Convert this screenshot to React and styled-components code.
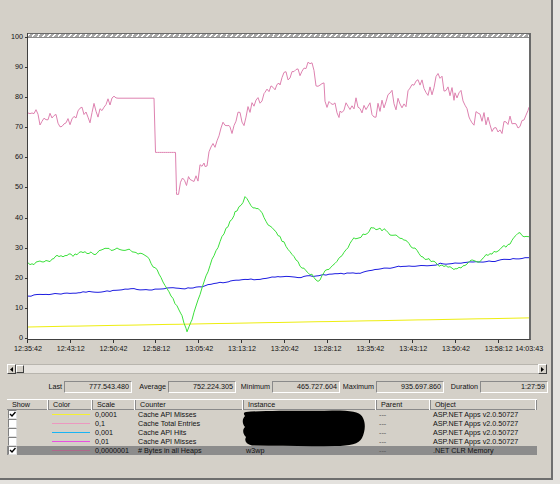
import styled, { createGlobalStyle } from "styled-components";

const GlobalStyle = createGlobalStyle`
  html, body { margin: 0; padding: 0; background: #e4e2de; }
  body {
    font-family: "Liberation Sans", Arial, sans-serif;
    font-size: 7.2px;
    color: #111;
  }
`;

// small seeded random so the traces look the same every run
function rng(seed) {
  let s = seed;
  return () => {
    s = (s + 0x6d2b79f5) | 0;
    let t = Math.imul(s ^ (s >>> 15), 1 | s);
    t = (t + Math.imul(t ^ (t >>> 7), 61 | t)) ^ t;
    return ((t ^ (t >>> 14)) >>> 0) / 4294967296;
  };
}

function series(keys, step, seed, smooth) {
  const r = rng(seed);
  const pts = [];
  let n = 0;
  for (let i = 0; i < keys.length - 1; i++) {
    const [x0, v0, a0] = keys[i];
    const [x1, v1, a1] = keys[i + 1];
    if (x1 - x0 < 1) {
      pts.push([x1, v1]);
      continue;
    }
    for (let x = x0; x < x1; x += step) {
      const t = (x - x0) / (x1 - x0);
      const base = v0 + (v1 - v0) * t;
      const amp = a0 + (a1 - a0) * t;
      n = n * smooth + (r() * 2 - 1) * amp;
      if (n > amp * 1.4) n = amp * 1.4;
      if (n < -amp * 1.4) n = -amp * 1.4;
      pts.push([x, amp > 0 ? base + n : base]);
    }
  }
  const last = keys[keys.length - 1];
  pts.push([last[0], last[1]]);
  return pts.map(([x, v]) => `${(x - 28).toFixed(1)},${(301 - v * 3.01).toFixed(1)}`).join(" ");
}

const pinkKeys = [
  [28, 75, 3], [40, 73, 3], [60, 73, 3], [80, 74, 3], [100, 76, 3], [112, 79, 2],
  [118, 80, 0], [155, 80, 0], [155.5, 62, 0], [176, 62, 0], [176.5, 49, 3.5],
  [190, 51, 3.5], [205, 60, 3], [215, 66, 3], [230, 70, 3], [250, 75, 3],
  [265, 82, 2], [280, 86, 2], [300, 89, 2], [312, 93, 1], [316, 83, 2.5],
  [325, 80, 3.5], [340, 78, 3.5], [360, 77, 3.5], [380, 78, 3.5], [400, 80, 3.5],
  [420, 84, 3.5], [440, 85, 3], [455, 80, 3], [470, 76, 3], [490, 72, 3],
  [510, 71, 3], [522, 71, 2], [529, 77, 1],
];

const greenKeys = [
  [28, 25], [40, 26], [55, 27], [75, 28], [95, 29], [115, 30], [130, 29], [145, 27],
  [155, 24], [165, 18], [175, 12], [182, 7], [187, 3], [192, 6], [200, 14], [210, 24],
  [222, 34], [235, 42], [245, 47], [258, 43], [272, 37], [288, 30], [302, 24], [312, 21],
  [318, 20], [325, 22], [340, 28], [355, 33], [372, 37], [388, 36], [405, 32], [425, 27],
  [442, 24], [455, 23], [470, 25], [490, 28], [508, 31], [520, 35], [529, 34],
].map(([x, v]) => [x, v, 0.7]);

const blueKeys = [
  [28, 14.5], [80, 15.5], [140, 16.5], [190, 17], [230, 19], [280, 20.5], [320, 21],
  [360, 22], [400, 24], [440, 25], [480, 25.5], [529, 27],
].map(([x, v]) => [x, v, 0.25]);

const yellowKeys = [[28, 4, 0], [529, 7, 0]];

const yLabels = ["100", "90", "80", "70", "60", "50", "40", "30", "20", "10", "0"];
const xLabels = [
  "12:35:42", "12:43:12", "12:50:42", "12:58:12", "13:05:42", "13:13:12",
  "13:20:42", "13:28:12", "13:35:42", "13:43:12", "13:50:42", "13:58:12",
];

const stats = [
  ["Last", "777.543.480"],
  ["Average", "752.224.305"],
  ["Minimum", "465.727.604"],
  ["Maximum", "935.697.860"],
  ["Duration", "1:27:59"],
];

const columns = ["Show", "Color", "Scale", "Counter", "Instance", "Parent", "Object"];

const rows = [
  { checked: true, color: "#f4f030", scale: "0,0001", counter: "Cache API Misses", instance: "", object: "ASP.NET Apps v2.0.50727" },
  { checked: false, color: "#ec98c0", scale: "0,1", counter: "Cache Total Entries", instance: "", object: "ASP.NET Apps v2.0.50727" },
  { checked: false, color: "#18b4f4", scale: "0,001", counter: "Cache API Hits", instance: "", object: "ASP.NET Apps v2.0.50727" },
  { checked: false, color: "#e850e0", scale: "0,01", counter: "Cache API Misses", instance: "", object: "ASP.NET Apps v2.0.50727" },
  { checked: true, color: "#b0688c", scale: "0,0000001", counter: "# Bytes in all Heaps", instance: "w3wp", object: ".NET CLR Memory", selected: true },
];

const App = () => {
  return (
    <>
      <GlobalStyle />
      <Window>
        <ChartRow>
          <YAxis>
            {yLabels.map((l) => (
              <YLabel key={l}>{l}</YLabel>
            ))}
          </YAxis>
          <PlotColumn>
            <Plot>
              <Hatch />
              <svg width="501" height="301" viewBox="0 0 501 301">
                <polyline points={series(yellowKeys, 10, 1, 0)} fill="none" stroke="#eeee10" strokeWidth="1" />
                <polyline points={series(blueKeys, 3, 7, 0.6)} fill="none" stroke="#1c1ce0" strokeWidth="1" />
                <polyline points={series(greenKeys, 2, 3, 0.6)} fill="none" stroke="#3ce03c" strokeWidth="1" />
                <polyline points={series(pinkKeys, 2, 11, 0.45)} fill="none" stroke="#de82b0" strokeWidth="1" />
              </svg>
            </Plot>
            <XTicks />
          </PlotColumn>
        </ChartRow>

        <XAxis>
          {xLabels.map((l) => (
            <XLabel key={l}>{l}</XLabel>
          ))}
          <LastXLabel>14:03:43</LastXLabel>
        </XAxis>

        <ScrollBar>
          <ScrollButton>
            <svg width="3" height="5" viewBox="0 0 3 5"><path d="M3 0 L0 2.5 L3 5Z" fill="#000" /></svg>
          </ScrollButton>
          <Track>
            <Thumb />
          </Track>
          <ScrollButton>
            <svg width="3" height="5" viewBox="0 0 3 5"><path d="M0 0 L3 2.5 L0 5Z" fill="#000" /></svg>
          </ScrollButton>
        </ScrollBar>

        <StatsRow>
          {stats.map(([label, value]) => (
            <Stat key={label}>
              <StatLabel>{label}</StatLabel>
              <StatBox>{value}</StatBox>
            </Stat>
          ))}
        </StatsRow>

        <Table>
          <Header>
            {columns.map((c) => (
              <HeaderCell key={c}>{c}</HeaderCell>
            ))}
          </Header>
          <Body>
            {rows.map((r, i) => (
              <Row key={i} $selected={r.selected}>
                <Cell>
                  <CheckBox>
                    {r.checked && (
                      <svg width="7" height="7" viewBox="0 0 7 7">
                        <path d="M1 3 L3 5 L6.5 1" fill="none" stroke="#000" strokeWidth="1.4" />
                      </svg>
                    )}
                  </CheckBox>
                </Cell>
                <Cell>
                  <Swatch $color={r.color} />
                </Cell>
                <Cell>{r.scale}</Cell>
                <Cell>{r.counter}</Cell>
                <Cell>{r.instance}</Cell>
                <Cell $muted>---</Cell>
                <Cell>{r.object}</Cell>
              </Row>
            ))}
            <Redaction width="127" height="37" viewBox="0 0 127 37">
              <path
                d="M6 2 C30 0 70 1 100 0.5 C115 1 121 3 123 8 C126 14 125 22 122 28 C119 34 110 36 95 36 C70 36.5 40 36 12 35.5 C6 34 4 31 6 27 C3 24 2 20 5 17 C2 13 2 9 5 6 C3 4 4 2 6 2Z"
                fill="#000"
              />
            </Redaction>
          </Body>
        </Table>
      </Window>
    </>
  );
};

export default App;

const Window = styled.div`
  width: 553px;
  height: 480px;
  box-sizing: border-box;
  background: #d4d0c8;
  border-right: 2px solid #6e6e6e;
  border-bottom: 2px solid #6e6e6e;
  padding-top: 33px;
  overflow: hidden;
`;

const ChartRow = styled.div`
  display: flex;
  align-items: flex-start;
`;

const YAxis = styled.div`
  width: 28px;
  height: 309px;
  display: flex;
  flex-direction: column;
  justify-content: space-between;
`;

const YLabel = styled.div`
  height: 8px;
  line-height: 8px;
  text-align: right;
  padding-right: 5px;
  position: relative;
  &::after {
    content: "";
    position: absolute;
    right: 0;
    top: 4px;
    width: 3px;
    height: 1px;
    background: #333;
  }
`;

const PlotColumn = styled.div`
  display: flex;
  flex-direction: column;
`;

const Plot = styled.div`
  width: 501px;
  display: flex;
  flex-direction: column;
  background: #fff;
  border-left: 1px solid #404040;
  border-right: 2px solid #6a6a6a;
  border-bottom: 1px solid #404040;
  margin-left: -1px;
  svg { display: block; }
`;

const Hatch = styled.div`
  height: 3px;
  border-top: 1px solid #6a6a6a;
  border-bottom: 1px solid #8a8a8a;
  background: repeating-linear-gradient(-50deg, #ffffff 0 1.4px, #a8a8a8 1.4px 4px);
`;

const XTicks = styled.div`
  height: 3px;
  width: 510px;
  margin-left: -1px;
  background: repeating-linear-gradient(90deg, #333 0 1px, transparent 1px 42.8px);
`;

const XAxis = styled.div`
  display: flex;
  padding-left: 6.6px;
  margin-top: 1px;
  height: 10px;
  line-height: 10px;
`;

const XLabel = styled.div`
  width: 42.8px;
  flex: none;
  text-align: center;
`;

const LastXLabel = styled.div`
  width: 30px;
  margin-left: -6px;
  text-align: center;
`;

const ScrollBar = styled.div`
  display: flex;
  margin: 10px 4px 0 7px;
  height: 10px;
`;

const ScrollButton = styled.div`
  width: 9px;
  height: 10px;
  box-sizing: border-box;
  display: flex;
  align-items: center;
  justify-content: center;
  background: #d4d0c8;
  border: 1px solid;
  border-color: #fff #404040 #404040 #fff;
  svg { display: block; }
`;

const Track = styled.div`
  flex: 1;
  background: #e6e3de;
  border-top: 1px solid #b8b5ae;
  border-bottom: 1px solid #b8b5ae;
  display: flex;
`;

const Thumb = styled.div`
  width: 8px;
  box-sizing: border-box;
  background: #d4d0c8;
  border: 1px solid;
  border-color: #fff #404040 #404040 #fff;
`;

const StatsRow = styled.div`
  display: flex;
  padding-left: 28px;
  margin-top: 7px;
  height: 12px;
`;

const Stat = styled.div`
  display: flex;
`;

const StatLabel = styled.div`
  width: 36px;
  box-sizing: border-box;
  padding-right: 2px;
  text-align: right;
  line-height: 12px;
`;

const StatBox = styled.div`
  width: 68px;
  box-sizing: border-box;
  border: 1px solid;
  border-color: #8a8a8a #fff #fff #8a8a8a;
  text-align: right;
  padding-right: 2px;
  line-height: 10px;
`;

const grid = "42px 44px 43px 108px 133px 54px 106px";

const Table = styled.div`
  margin: 6px 0 0 7px;
  width: 530px;
`;

const Header = styled.div`
  display: grid;
  grid-template-columns: ${grid};
  height: 11px;
  box-sizing: border-box;
  border-top: 1px solid #fff;
  border-bottom: 1px solid #8a8a8a;
`;

const HeaderCell = styled.div`
  line-height: 10px;
  padding-left: 4px;
  border-right: 1px solid #8a8a8a;
  box-shadow: inset -1px 0 0 #fff;
  &:first-child { padding-left: 5px; }
`;

const Body = styled.div`
  position: relative;
`;

const Row = styled.div`
  display: grid;
  grid-template-columns: ${grid};
  height: 9px;
  line-height: 9px;
  background: ${(p) => (p.$selected ? "#8c8c8c" : "transparent")};
`;

const Cell = styled.div`
  padding-left: 2px;
  white-space: nowrap;
  display: flex;
  align-items: center;
  color: ${(p) => (p.$muted ? "#555" : "#111")};
`;

const CheckBox = styled.div`
  width: 9px;
  height: 9px;
  box-sizing: border-box;
  margin-left: -1px;
  background: #fff;
  border: 1px solid;
  border-color: #808080 #e0e0e0 #e0e0e0 #808080;
  display: flex;
  align-items: center;
  justify-content: center;
  svg { display: block; }
`;

const Swatch = styled.div`
  width: 38px;
  height: 1px;
  margin-left: 1px;
  background: ${(p) => p.$color};
`;

const Redaction = styled.svg`
  position: absolute;
  left: 233px;
  top: 0;
`;
